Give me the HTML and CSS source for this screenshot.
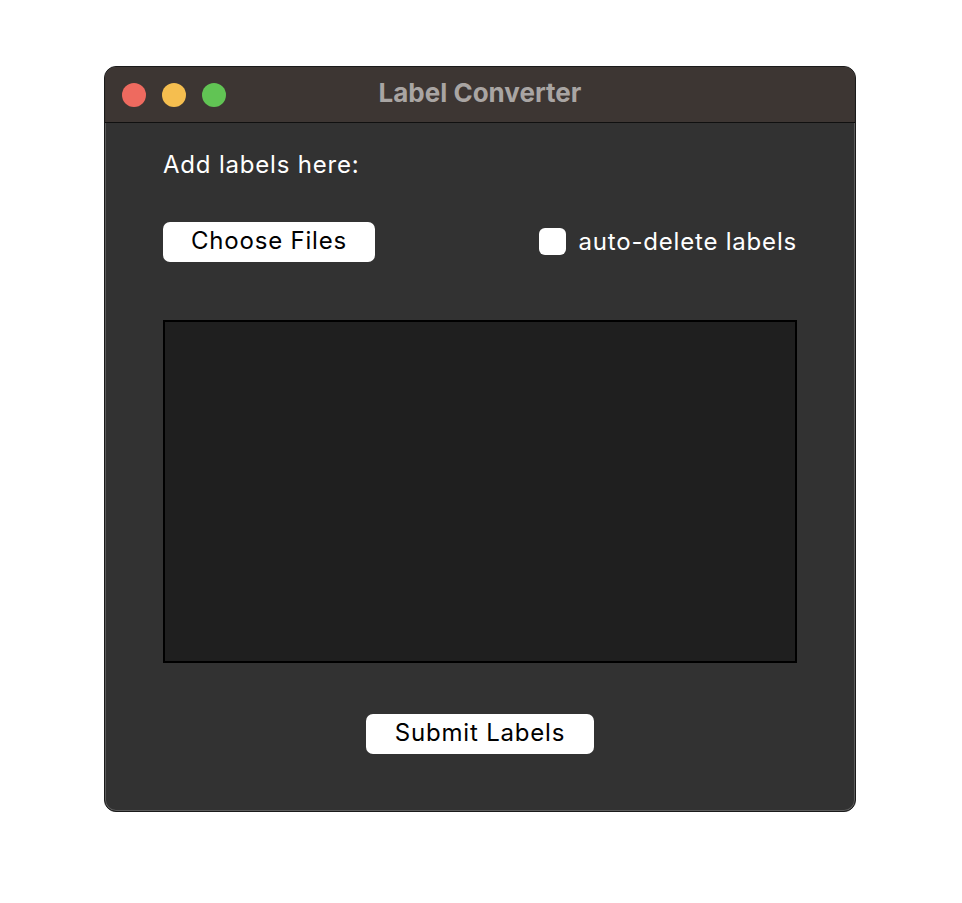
FILE: index.html
```html
<!DOCTYPE html>
<html>
<head>
<meta charset="utf-8">
<link rel="stylesheet" href="styles.css">
</head>
<body>
<div class="window">
  <div class="titlebar">
    <div class="lights">
      <span class="light red"></span>
      <span class="light yellow"></span>
      <span class="light green"></span>
    </div>
    <div class="title">Label Converter</div>
  </div>
  <div class="content">
    <div class="heading">Add labels here:</div>
    <div class="row">
      <button class="btn choose">Choose Files</button>
      <label class="check"><span class="box"></span><span>auto-delete labels</span></label>
    </div>
    <div class="drop"></div>
    <div class="submit-row">
      <button class="btn submit">Submit Labels</button>
    </div>
  </div>
</div>
</body>
</html>
```
FILE: styles.css
```css
html, body {
  margin: 0;
  padding: 0;
  background: #ffffff;
}
body {
  padding: 66px 0 0 104px;
  font-family: Inter, "Liberation Sans", sans-serif;
}
.window {
  width: 752px;
  height: 746px;
  box-sizing: border-box;
  background: #323232;
  border: 1px solid #1a1a1a;
  border-radius: 12px;
  box-shadow: inset 0 0 0 1px #5c5c5c;
  overflow: hidden;
  display: flex;
  flex-direction: column;
}
.titlebar {
  height: 56px;
  flex: none;
  box-sizing: border-box;
  background: #3d3633;
  border-bottom: 1px solid #101010;
  display: flex;
  align-items: center;
  position: relative;
}
.lights {
  display: flex;
  gap: 16px;
  padding-left: 17px;
}
.light {
  width: 24px;
  height: 24px;
  border-radius: 50%;
  display: block;
}
.red { background: #ee6a5f; }
.yellow { background: #f5be4f; }
.green { background: #61c454; }
.title {
  position: absolute;
  left: 0;
  right: 0;
  text-align: center;
  font-family: Inter, "Liberation Sans", sans-serif;
  font-weight: 700;
  font-size: 26px;
  color: #a9a5a3;
  top: 11px;
  line-height: 30px;
}
.content {
  padding: 0 58px 0 58px;
  display: flex;
  flex-direction: column;
}
.heading {
  color: #ffffff;
  font-size: 24px;
  letter-spacing: 0.8px;
  margin-top: 27px;
  height: 30px;
  line-height: 30px;
}
.row {
  margin-top: 42px;
  display: flex;
  justify-content: space-between;
  align-items: center;
}
.btn {
  background: #ffffff;
  border: none;
  border-radius: 7px;
  height: 40px;
  font-family: Inter, "Liberation Sans", sans-serif;
  font-size: 24px;
  letter-spacing: 0.8px;
  color: #000000;
  padding: 0 0 3px 0;
}
.choose {
  width: 212px;
}
.check {
  display: flex;
  align-items: center;
  gap: 13px;
  color: #ffffff;
  font-size: 24px;
  letter-spacing: 0.8px;
  padding-bottom: 2px;
}
.box {
  width: 27px;
  height: 27px;
  background: #ffffff;
  border-radius: 6px;
  display: block;
}
.drop {
  margin-top: 58px;
  height: 343px;
  box-sizing: border-box;
  background: #1f1f1f;
  border: 2px solid #000000;
}
.submit-row {
  margin-top: 51px;
  display: flex;
  justify-content: center;
}
.submit {
  width: 228px;
}
```
